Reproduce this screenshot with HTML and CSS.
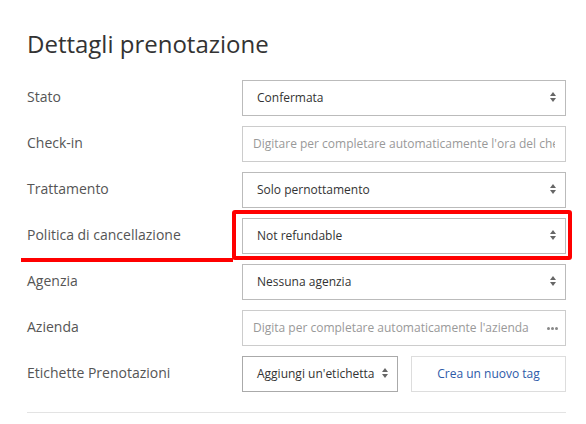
FILE: index.html
```html
<!DOCTYPE html>
<html lang="it">
<head>
  <meta charset="UTF-8">
  <title>Dettagli prenotazione</title>
  <link rel="stylesheet" href="styles.css">
</head>
<body>
  <div class="details">
    <h2>Dettagli prenotazione</h2>

    <div class="row">
      <label>Stato</label>
      <div class="field select">Confermata<span class="arrows"></span></div>
    </div>
    <div class="row">
      <label>Check-in</label>
      <div class="field input placeholder"><span class="clip">Digitare per completare automaticamente l'ora del check-in</span></div>
    </div>
    <div class="row">
      <label>Trattamento</label>
      <div class="field select">Solo pernottamento<span class="arrows"></span></div>
    </div>
    <div class="row highlighted">
      <label>Politica di cancellazione</label>
      <div class="field select">Not refundable<span class="arrows"></span></div>
      <!-- annotation -->
      <span class="mark-line"></span>
      <span class="mark-box"></span>
    </div>
    <div class="row">
      <label>Agenzia</label>
      <div class="field select">Nessuna agenzia<span class="arrows"></span></div>
    </div>
    <div class="row">
      <label>Azienda</label>
      <div class="field input placeholder">Digita per completare automaticamente l'azienda<span class="dots"><i></i><i></i><i></i></span></div>
    </div>
    <div class="row">
      <label>Etichette Prenotazioni</label>
      <div class="tags">
        <div class="field select small">Aggiungi un'etichetta<span class="arrows"></span></div>
        <a href="#" class="new-tag">Crea un nuovo tag</a>
      </div>
    </div>

    <hr>
  </div>
</body>
</html>
```

FILE: styles.css
```css
body {
  margin: 0;
  font-family: "Open Sans", Arial, sans-serif;
  background: #fff;
}
.details {
  width: 539px;
  padding: 28px 0 0 27px;
}
h2 {
  margin: 0 0 20px;
  font-size: 24px;
  font-weight: 400;
  color: #333;
  line-height: 32px;
}
.row {
  position: relative;
  display: flex;
  align-items: center;
  height: 36px;
  margin-bottom: 10px;
}
.row label {
  width: 215px;
  font-size: 14px;
  line-height: 18px;
  color: #555;
  margin-top: -2px;
}
.field {
  position: relative;
  box-sizing: border-box;
  width: 324px;
  height: 36px;
  line-height: 34px;
  font-size: 12px;
  color: #333;
  background: #fff;
  border: 1px solid #bbb;
  white-space: nowrap;
  overflow: hidden;
}
.select {
  padding-left: 14px;
}
.input {
  padding: 0 10px;
  border-color: #ccc;
}
.clip {
  display: block;
  overflow: hidden;
}
.placeholder {
  color: #999;
}
.arrows {
  position: absolute;
  right: 9px;
  top: 11px;
  width: 0;
  height: 0;
  border-left: 3px solid transparent;
  border-right: 3px solid transparent;
  border-bottom: 4px solid #666;
}
.arrows::after {
  content: "";
  position: absolute;
  left: -3px;
  top: 6px;
  border-left: 3px solid transparent;
  border-right: 3px solid transparent;
  border-top: 4px solid #666;
}
.dots {
  position: absolute;
  right: 0;
  top: 0;
  display: flex;
  align-items: center;
  gap: 1px;
  width: 18px;
  height: 34px;
  background: #fff;
}
.dots i {
  width: 3px;
  height: 3px;
  border-radius: 50%;
  background: #888;
}
.tags {
  display: flex;
  gap: 13px;
}
.small {
  width: 156px;
  border-color: #aaa;
}
.new-tag {
  box-sizing: border-box;
  width: 155px;
  height: 36px;
  line-height: 34px;
  text-align: center;
  font-size: 12px;
  color: #2d5aa8;
  text-decoration: none;
  border: 1px solid #ddd;
}
.mark-box {
  position: absolute;
  left: 205px;
  top: -8px;
  width: 332px;
  height: 42px;
  border: 4px solid #f00;
  border-radius: 3px;
}
.mark-line {
  position: absolute;
  left: -6px;
  top: 40px;
  width: 212px;
  height: 4px;
  background: #f00;
}
hr {
  margin: 20px 0 0;
  border: 0;
  border-top: 1px solid #e3e3e3;
}
```
